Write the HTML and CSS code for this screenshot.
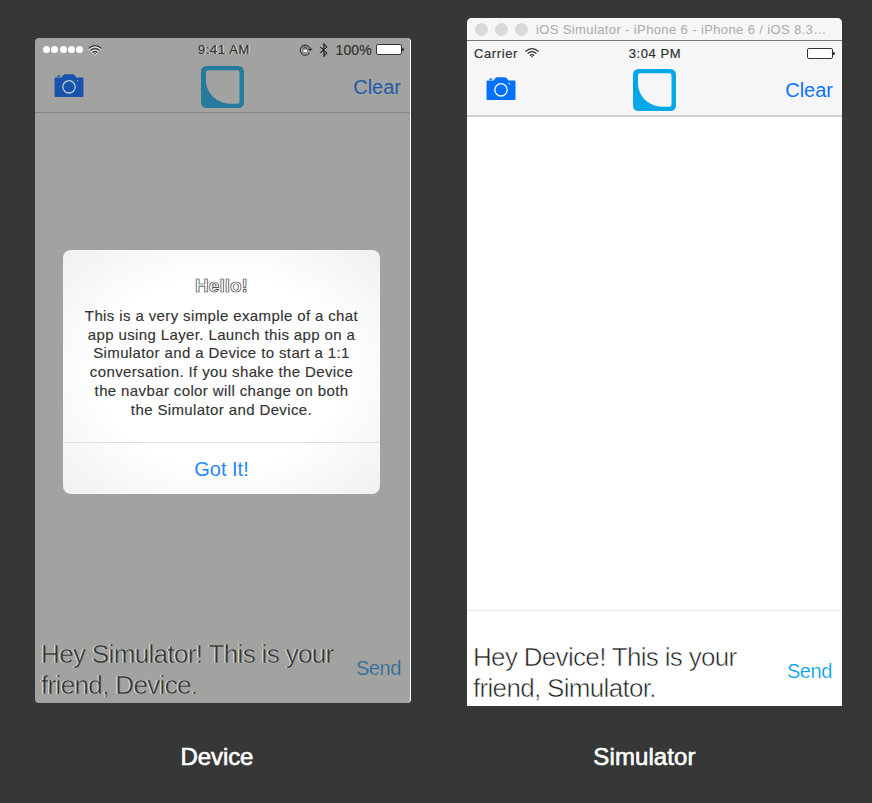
FILE: index.html
```html
<!DOCTYPE html>
<html lang="en">
<head>
<meta charset="utf-8">
<title>Device and Simulator</title>
<link rel="stylesheet" href="styles.css">
</head>
<body>
<svg class="defs" width="0" height="0" aria-hidden="true">
  <symbol id="camera" viewBox="0 0 30 23">
    <path stroke="none" d="M1.500 3.500H7.500L9.500 1Q10.200.2 11.500.2H18.500Q19.800.2 20.500 1L22.500 3.500H28.500Q29.500 3.500 29.500 4.500V22Q29.500 23 28.500 23H1.500Q.5 23 .5 22V4.500Q.5 3.500 1.500 3.500Z" fill="currentColor"/>
    <rect stroke="none" x="3.200" y="1.500" width="3.200" height="1.300" fill="currentColor"/>
    <circle cx="15" cy="12.800" r="6.200" fill="none" stroke-width="1.300"/>
    <circle stroke="none" cx="23.400" cy="6.800" r=".8"/>
  </symbol>
  <symbol id="logo" viewBox="0 0 43 42">
    <path fill-rule="evenodd" fill="currentColor" d="M6 0H37Q43 0 43 6V36Q43 42 37 42H6Q0 42 0 36V6Q0 0 6 0ZM7 4.300Q5 4.300 5 6.300V14C5 27 15 37 29 37.800H36.500Q38.500 37.800 38.500 35.800V6.300Q38.500 4.300 36.500 4.300Z"/>
  </symbol>
  <symbol id="wifi" viewBox="0 0 14 10">
    <g fill="none" stroke="currentColor" stroke-width="1.300"><path d="M.5 3.400Q7-2 13.500 3.400M2.600 5.500Q7 1.900 11.400 5.500M4.700 7.500Q7 5.700 9.300 7.500"/></g><path d="M5.800 8.200H8.200L7 9.700Z" fill="currentColor"/>
  </symbol>
</svg>
<main class="stage">
  <section class="column">
    <div class="phone device">
      <div class="bar">
        <div class="status">
          <div class="side"><span class="dots"><i></i><i></i><i></i><i></i><i></i></span><svg class="wifi"><use href="#wifi"/></svg></div>
          <span class="time etched">9:41 AM</span>
          <div class="side end">
            <svg class="lock" viewBox="0 0 14 12"><path d="M10.600 8.700A5 5 0 1 1 11 4.500L11.400 6M9.200 5L11.400 6.300L13.200 4.600" fill="none" stroke="#333" stroke-width="1.1"/><path d="M4.800 5.500V4.300Q4.800 3 6.200 3Q7.600 3 7.600 4.300V5.500" fill="none" stroke="#333"/><path d="M4 5.300H8.400V8.500H4Z" fill="#fff" stroke="#333" stroke-width=".5"/></svg>
            <svg class="bt" viewBox="0 0 10 14"><path d="M2.500 4L9 10L6 13V1L9 4L2.500 10" fill="none" stroke="#fff" stroke-width="1"/><path d="M1.500 4L8 10L5 13V1L8 4L1.500 10" fill="none" stroke="#333" stroke-width="1.5"/></svg>
            <span class="pct">100%</span>
            <span class="battery"></span>
          </div>
        </div>
        <div class="nav"><svg class="camera"><use href="#camera"/></svg><svg class="logo"><use href="#logo"/></svg><span class="clear">Clear</span></div>
      </div>
      <div class="chat"></div>
      <div class="composer"><p class="message">Hey Simulator! This is your<br>friend, Device.</p><span class="send">Send</span></div>
      <div class="alert">
        <h2>Hello!</h2>
        <p>This is a very simple example of a chat<br>app using Layer. Launch this app on a<br>Simulator and a Device to start a 1:1<br>conversation. If you shake the Device<br>the navbar color will change on both<br>the Simulator and Device.</p>
        <div class="ok">Got It!</div>
      </div>
    </div>
    <div class="caption">Device</div>
  </section>
  <section class="column">
    <div class="phone simulator">
      <div class="titlebar"><b></b><b></b><b></b><span>iOS Simulator - iPhone 6 - iPhone 6 / iOS 8.3…</span></div>
      <div class="bar">
        <div class="status">
          <div class="side"><span class="carrier">Carrier</span><svg class="wifi"><use href="#wifi"/></svg></div>
          <span class="time">3:04 PM</span>
          <div class="side end"><span class="battery"></span></div>
        </div>
        <div class="nav"><svg class="camera"><use href="#camera"/></svg><svg class="logo"><use href="#logo"/></svg><span class="clear">Clear</span></div>
      </div>
      <div class="chat"></div>
      <div class="composer"><p class="message">Hey Device! This is your<br>friend, Simulator.</p><span class="send">Send</span></div>
    </div>
    <div class="caption sim">Simulator</div>
  </section>
</main>
</body>
</html>
```
FILE: styles.css
```css
* { box-sizing: border-box; }
body { margin: 0; height: 803px; overflow: hidden; background: #363837; color: #333; font-family: "Liberation Sans", Arial, sans-serif; }
p, h2 { margin: 0; }
.defs { display: block; height: 0; }
.stage { display: grid; grid-template-columns: 376px 375px; column-gap: 56px; padding: 18px 0 0 35px; }
.column { display: grid; grid-template-rows: 689px 1fr; }
.phone { display: flex; flex-direction: column; overflow: hidden; }
.device { position: relative; margin-top: 20px; height: 665px; background: #a2a2a0; border-radius: 4px; border-right: 1px solid #fff; }
.simulator { height: 688px; background: #fff; border-radius: 5px 5px 0 0; }
.titlebar { height: 23px; flex: none; display: flex; align-items: center; gap: 7px; padding-left: 8px; background: #f6f6f8; border-bottom: 1px solid #747775; color: #aaa; font-size: 13px; letter-spacing: .38px; white-space: nowrap; }
.titlebar b { width: 13px; height: 13px; border-radius: 50%; background: #d9d9d9; }
.titlebar span { margin-left: 1px; }
.bar { height: 75px; flex: none; border-bottom: 1px solid #828288; }
.simulator .bar { height: 76px; background: #f6f6f9; border-bottom: 2px solid #d0d0d2; }
.status { height: 22px; display: grid; grid-template-columns: 1fr auto 1fr; align-items: center; padding: 1px 5px 0 8px; font-size: 13px; letter-spacing: .6px; }
.simulator .status { padding: 2px 6px 0 7px; }
.side { display: flex; align-items: center; gap: 5px; }
.end { justify-content: flex-end; gap: 6px; }
.dots { display: flex; gap: 1.300px; }
.dots i { width: 7px; height: 7px; border-radius: 50%; background: #fff; }
.wifi { width: 14px; height: 10px; }
.simulator .wifi { margin-left: 2px; }
.carrier { letter-spacing: .6px; -webkit-text-stroke: .2px #333; }
.time { -webkit-text-stroke: .2px #333; }
.device .wifi { color: #333; filter: drop-shadow(0 1px 0 #fff); }
.etched { text-shadow: 1px 0 0 #e8e8e8; }
.lock { width: 14px; height: 12px; }
.bt { width: 10px; height: 14px; }
.pct { font-size: 14px; letter-spacing: .2px; -webkit-text-stroke: .2px #333; }
.battery { position: relative; width: 26px; height: 11px; margin: 0 3px 0 -2px; background: #fff; border: 1px solid #333; border-radius: 2px; }
.battery::after { content: ""; position: absolute; right: -3px; top: 3px; width: 2px; height: 3px; background: #333; border-radius: 0 2px 2px 0; }
.nav { display: grid; grid-template-columns: 1fr 44px 1fr; align-items: center; height: 53px; padding: 0 9px 0 19px; }
.camera { width: 30px; height: 23px; margin-top: -2px; color: #1854ae; fill: #a2a2a0; stroke: #c0c8d0; }
.simulator .camera { color: #0070ff; fill: #fff; stroke: #fff; }
.logo { width: 43px; height: 42px; color: #267a9e; margin-left: -5px; margin-top: 1px; }
.simulator .logo { color: #05a8e6; }
.clear { justify-self: end; margin-top: 2px; font-size: 20px; color: #1d5aac; }
.simulator .clear { color: #0a75ff; }
.chat { flex: 1; }
.composer { height: 95px; flex: none; display: flex; justify-content: space-between; padding: 31px 9px 0 6px; }
.simulator .composer { height: 96px; border-top: 1px solid #e8e8ef; padding-right: 10px; }
.message { font-size: 26px; line-height: 31px; letter-spacing: -.65px; white-space: nowrap; color: #333; text-shadow: -1px 0 0 #eee; -webkit-text-stroke: .4px #b3b3b1; }
.simulator .message { color: #222; text-shadow: none; -webkit-text-stroke: .55px #fff; letter-spacing: -.68px; }
.send { margin-top: 17px; font-size: 20px; line-height: 24px; letter-spacing: -.4px; color: #306e9b; -webkit-text-stroke: .2px #a2a2a0; }
.simulator .send { color: #05a0e6; -webkit-text-stroke-color: #fff; }
.alert { position: absolute; left: 28px; top: 212px; width: 317px; height: 244px; border-radius: 8px; background: radial-gradient(ellipse at center, #fff 55%, #f0f0f2 100%); text-align: center; }
.alert h2 { margin-top: 24px; height: 33px; font-size: 19px; line-height: 23px; font-weight: bold; color: #fff; -webkit-text-stroke: .7px #333; }
.alert p { height: 135px; font-size: 15px; line-height: 18.700px; letter-spacing: .38px; white-space: nowrap; -webkit-text-stroke: .15px #333; }
.ok { height: 52px; border-top: 1px solid #dedfe1; line-height: 53px; font-size: 20px; color: #2888f5; }
.caption { padding-top: 36px; height: 70px; text-align: center; font-size: 24px; line-height: 28px; letter-spacing: -.1px; color: #fff; -webkit-text-stroke: .6px #fff; padding-right: 12px; }
.caption.sim { padding-right: 20px; letter-spacing: .1px; }
```
